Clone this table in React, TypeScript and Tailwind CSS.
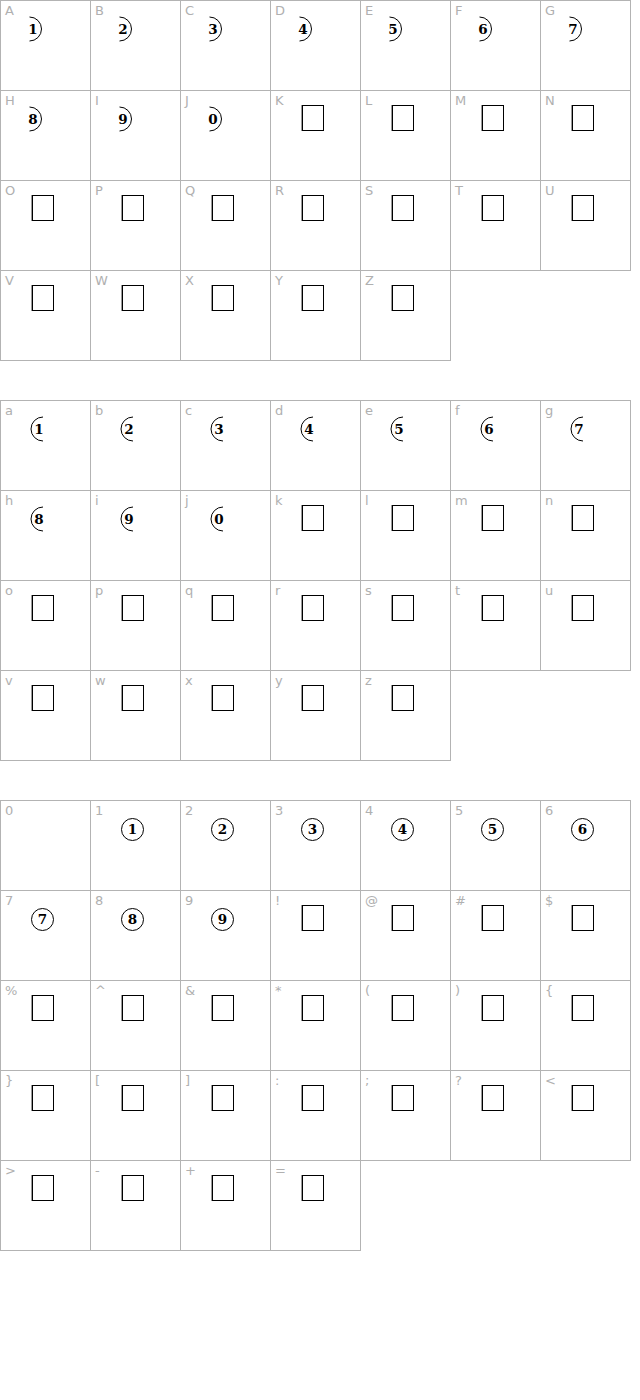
import React from "react";

type Kind = "right" | "left" | "full" | "box" | "none";
type Cell = { label: string; kind: Kind; digit?: string };

const digits = ["1", "2", "3", "4", "5", "6", "7", "8", "9", "0"];

const upper: Cell[] = "ABCDEFGHIJKLMNOPQRSTUVWXYZ".split("").map((l, i) =>
  i < 10 ? { label: l, kind: "right", digit: digits[i] } : { label: l, kind: "box" }
);
const lower: Cell[] = "abcdefghijklmnopqrstuvwxyz".split("").map((l, i) =>
  i < 10 ? { label: l, kind: "left", digit: digits[i] } : { label: l, kind: "box" }
);
const symLabels = ["!", "@", "#", "$", "%", "^", "&", "*", "(", ")", "{", "}", "[", "]", ":", ";", "?", "<", ">", "-", "+", "="];
const others: Cell[] = [
  { label: "0", kind: "none" },
  ...["1", "2", "3", "4", "5", "6", "7", "8", "9"].map((d) => ({ label: d, kind: "full" as Kind, digit: d })),
  ...symLabels.map((s) => ({ label: s, kind: "box" as Kind })),
];

const digitClass = "font-['DejaVu_Serif','Liberation_Serif',serif] font-bold text-[13.5px] fill-black";

function Glyph({ cell }: { cell: Cell }) {
  return (
    <svg width={89} height={40} viewBox="1 14 89 40" className="-mt-[4px] block">
      {cell.kind === "box" && (
        <g>
          <line x1={31.5} y1={15} x2={31.5} y2={41} stroke="#9a9a9a" strokeWidth={1} />
          <rect x={32.5} y={15.5} width={21} height={25} fill="none" stroke="#000" strokeWidth={1} />
        </g>
      )}
      {cell.kind === "full" && (
        <g>
          <circle cx={42.5} cy={29.5} r={11} fill="none" stroke="#000" strokeWidth={1} />
          <text x={42.5} y={34} textAnchor="middle" className={digitClass}>
            {cell.digit}
          </text>
        </g>
      )}
      {cell.kind === "right" && (
        <g>
          <path d="M29.5 17 A12 12 0 0 1 29.5 41" fill="none" stroke="#000" strokeWidth={1} />
          <text x={33} y={34} textAnchor="middle" className={digitClass}>
            {cell.digit}
          </text>
        </g>
      )}
      {cell.kind === "left" && (
        <g>
          <path d="M43 17 A12 12 0 0 0 43 41" fill="none" stroke="#000" strokeWidth={1} />
          <text x={39} y={34} textAnchor="middle" className={digitClass}>
            {cell.digit}
          </text>
        </g>
      )}
    </svg>
  );
}

function Section({ cells }: { cells: Cell[] }) {
  return (
    <div className="grid grid-cols-[repeat(7,90px)] auto-rows-[90px]">
      {cells.map((c, i) => (
        <div key={i} className="w-[91px] h-[91px] border border-[#b3b3b3] bg-white">
          <div className="pl-[4px] pt-[2px] h-[17px] text-[13px] leading-[15px] text-[#b0b0b0] font-['DejaVu_Sans','Liberation_Sans',sans-serif]">
            {c.label}
          </div>
          <Glyph cell={c} />
        </div>
      ))}
    </div>
  );
}

export default function App() {
  return (
    <div className="w-[640px] min-h-[1400px] bg-white flex flex-col gap-[40px]">
      <Section cells={upper} />
      <Section cells={lower} />
      <Section cells={others} />
    </div>
  );
}
